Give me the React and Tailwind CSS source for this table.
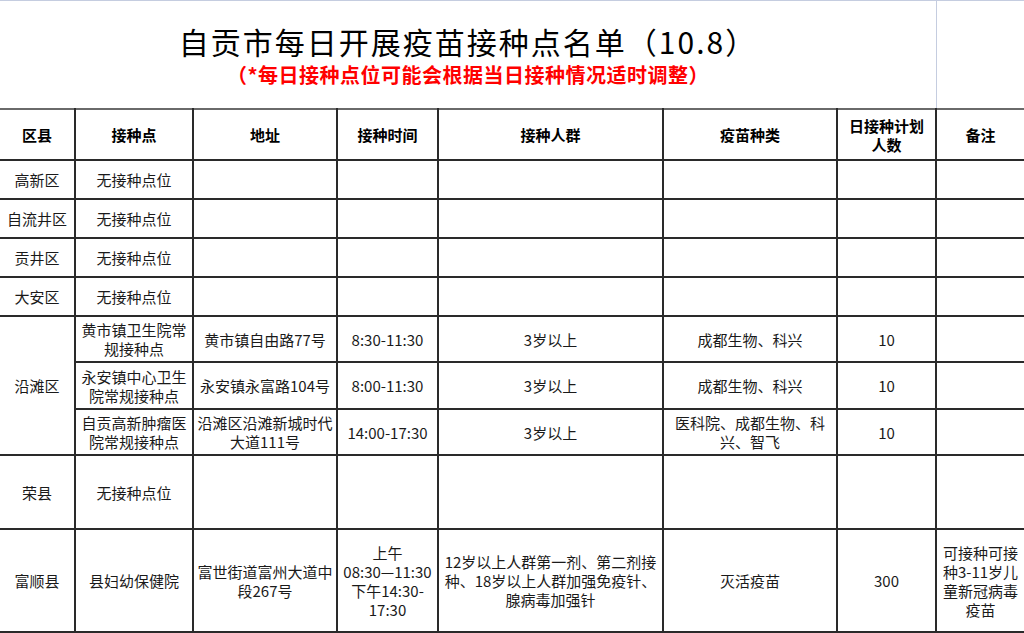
import React from "react";

const F = { fontFamily: '"Noto Sans CJK SC", "Noto Sans", sans-serif' };

function Td({ children, className = "", ...rest }) {
  return (
    <td
      {...rest}
      className={
        "border-2 border-[#2a2a2a] text-center align-middle px-[2px] text-[15px] leading-[19px] text-[#1a1a1a] " +
        className
      }
    >
      {children}
    </td>
  );
}

function Th({ children, className = "" }) {
  return (
    <th
      className={
        "border-2 border-[#2a2a2a] border-t-[#6a6a6a] text-center align-middle px-[2px] text-[15px] leading-[19px] font-bold text-black " +
        className
      }
    >
      {children}
    </th>
  );
}

function EmptyRow({ name, h }) {
  return (
    <tr className={h}>
      <Td className="border-l-0">{name}</Td>
      <Td>无接种点位</Td>
      <Td></Td>
      <Td></Td>
      <Td></Td>
      <Td></Td>
      <Td></Td>
      <Td className="border-r-0"></Td>
    </tr>
  );
}

export default function App() {
  return (
    <div className="w-[1024px] h-[633px] overflow-hidden bg-white" style={F}>
      <div className="flex h-[108px] border-t border-[#c5cde0]">
        <div className="w-[936px] flex flex-col items-center pt-[24px]">
          <div className="text-[30px] leading-[32px] text-black tracking-[2px]">
            自贡市每日开展疫苗接种点名单（10.8）
          </div>
          <div className="text-[20px] leading-[24px] font-bold text-[#ff0000] mt-[6px] tracking-[0.5px]">
            （*每日接种点位可能会根据当日接种情况适时调整）
          </div>
        </div>
        <div className="flex-1 border-l border-[#c5cde0]"></div>
      </div>
      <table className="table-fixed border-collapse w-[1024px]">
        <colgroup>
          <col className="w-[75px]" />
          <col className="w-[118px]" />
          <col className="w-[144px]" />
          <col className="w-[101px]" />
          <col className="w-[225px]" />
          <col className="w-[174px]" />
          <col className="w-[99px]" />
          <col className="w-[88px]" />
        </colgroup>
        <thead>
          <tr className="h-[51px]">
            <Th className="border-l-0">区县</Th>
            <Th>接种点</Th>
            <Th>地址</Th>
            <Th>接种时间</Th>
            <Th>接种人群</Th>
            <Th>疫苗种类</Th>
            <Th>
              日接种计划
              <br />
              人数
            </Th>
            <Th className="border-r-0">备注</Th>
          </tr>
        </thead>
        <tbody>
          <EmptyRow name="高新区" h="h-[39px]" />
          <EmptyRow name="自流井区" h="h-[39px]" />
          <EmptyRow name="贡井区" h="h-[39px]" />
          <EmptyRow name="大安区" h="h-[39px]" />
          <tr className="h-[46px]">
            <Td rowSpan={3} className="border-l-0">沿滩区</Td>
            <Td>
              黄市镇卫生院常
              <br />
              规接种点
            </Td>
            <Td>黄市镇自由路77号</Td>
            <Td className="text-[14px]">8:30-11:30</Td>
            <Td className="text-[14px]">3岁以上</Td>
            <Td className="text-[14px]">成都生物、科兴</Td>
            <Td className="text-[13px]">10</Td>
            <Td className="border-r-0"></Td>
          </tr>
          <tr className="h-[47px]">
            <Td>
              永安镇中心卫生
              <br />
              院常规接种点
            </Td>
            <Td>永安镇永富路104号</Td>
            <Td className="text-[14px]">8:00-11:30</Td>
            <Td className="text-[14px]">3岁以上</Td>
            <Td className="text-[14px]">成都生物、科兴</Td>
            <Td className="text-[13px]">10</Td>
            <Td className="border-r-0"></Td>
          </tr>
          <tr className="h-[46px]">
            <Td>
              自贡高新肿瘤医
              <br />
              院常规接种点
            </Td>
            <Td>
              沿滩区沿滩新城时代
              <br />
              大道111号
            </Td>
            <Td className="text-[14px]">14:00-17:30</Td>
            <Td className="text-[14px]">3岁以上</Td>
            <Td className="text-[14px]">
              医科院、成都生物、科
              <br />
              兴、智飞
            </Td>
            <Td className="text-[13px]">10</Td>
            <Td className="border-r-0"></Td>
          </tr>
          <EmptyRow name="荣县" h="h-[74px]" />
          <tr className="h-[103px]">
            <Td className="border-l-0">富顺县</Td>
            <Td>县妇幼保健院</Td>
            <Td>
              富世街道富州大道中
              <br />
              段267号
            </Td>
            <Td className="text-[14px]">
              上午
              <br />
              08:30—11:30
              <br />
              下午14:30-
              <br />
              17:30
            </Td>
            <Td className="text-[14px]">
              12岁以上人群第一剂、第二剂接
              <br />
              种、18岁以上人群加强免疫针、
              <br />
              腺病毒加强针
            </Td>
            <Td>灭活疫苗</Td>
            <Td className="text-[13px]">300</Td>
            <Td className="border-r-0">
              可接种可接
              <br />
              种3-11岁儿
              <br />
              童新冠病毒
              <br />
              疫苗
            </Td>
          </tr>
        </tbody>
      </table>
    </div>
  );
}
